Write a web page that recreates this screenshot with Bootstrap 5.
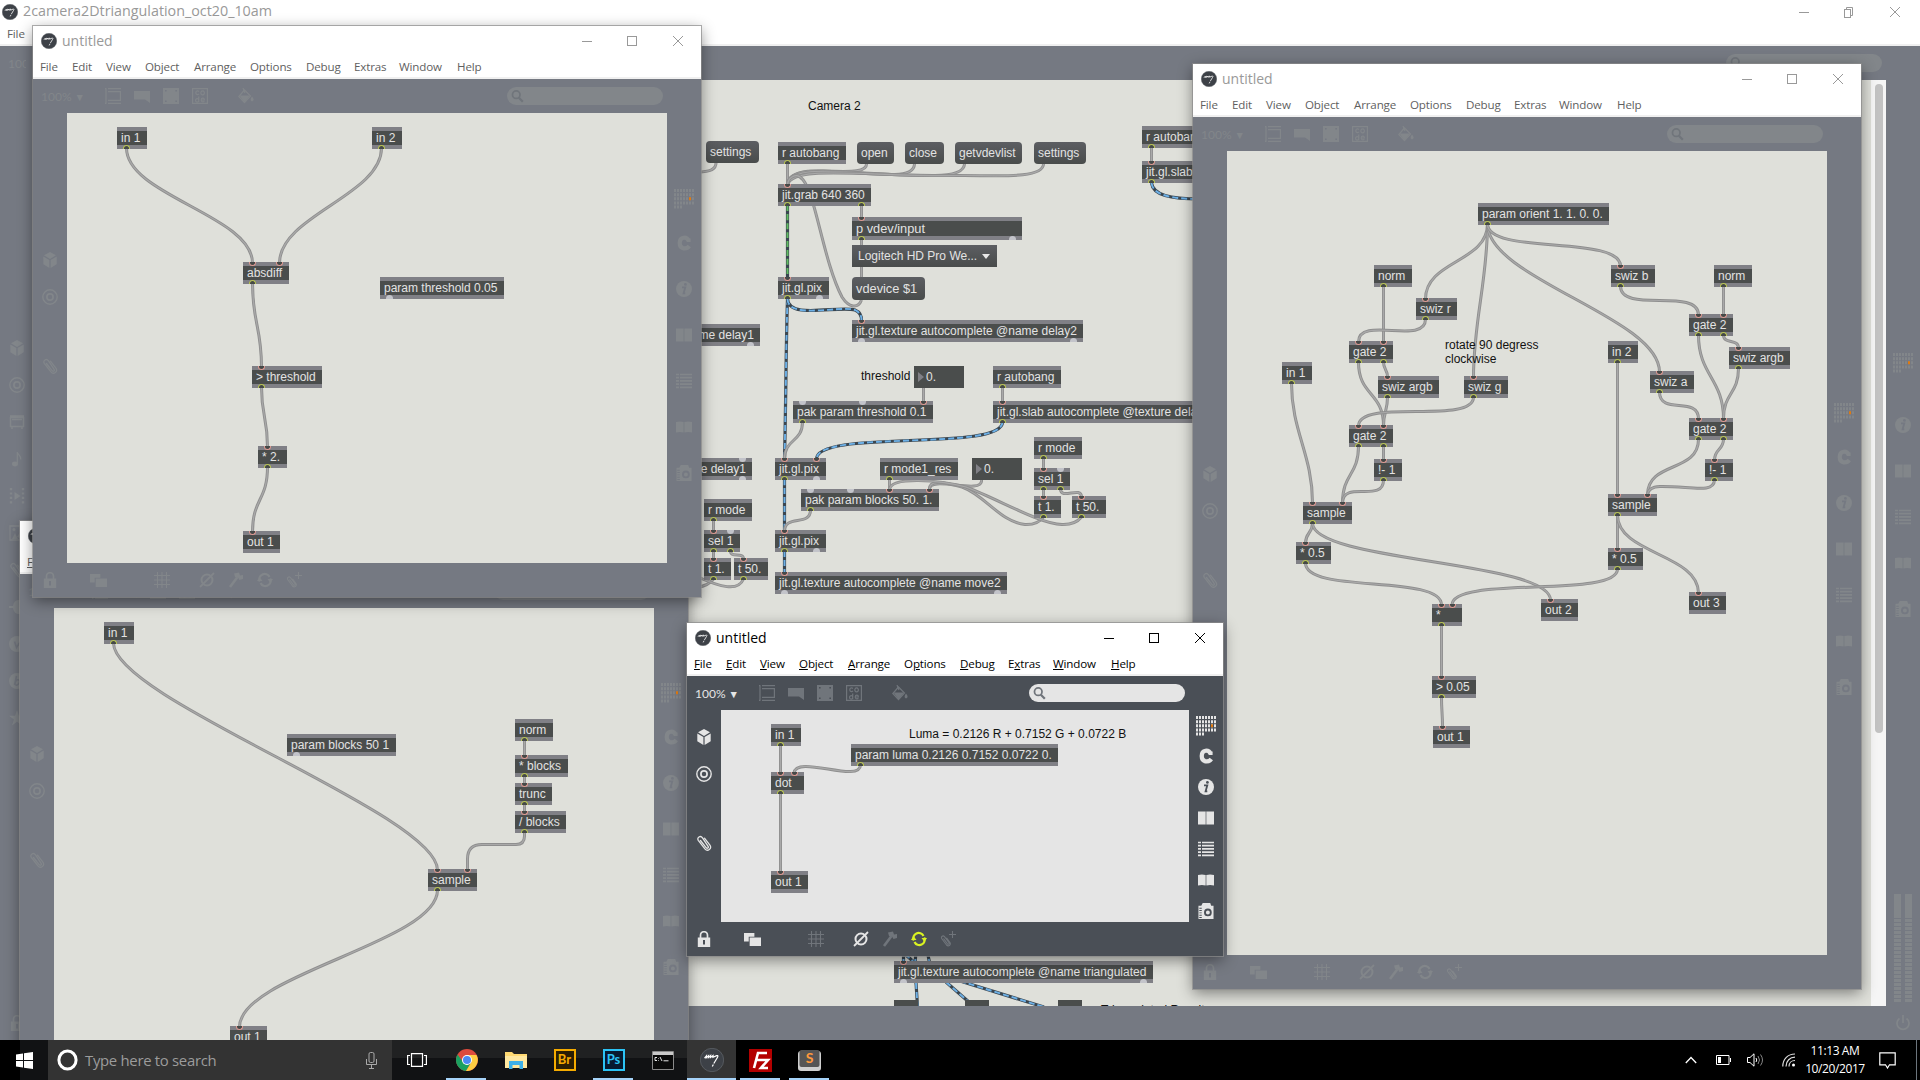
<!DOCTYPE html>
<html lang="en">
<head>
<meta charset="utf-8">
<title>2camera2Dtriangulation_oct20_10am</title>
<link rel="stylesheet" href="https://cdn.jsdelivr.net/npm/bootstrap@5.3.0/dist/css/bootstrap.min.css">
<style>
body{width:1920px;height:1080px;overflow:hidden;background:#757982;font-family:"Open Sans","Noto Sans",sans-serif;line-height:1}
svg{display:block}
.win{--frame:#757982;--ink:#82868a;--dim:#82868a;--paper:#dfe0da;--cap:#999;--menu:#5f5f5f;box-shadow:0 0 0 1px rgba(140,140,140,.7),0 4px 14px rgba(0,0,0,.45);background:var(--frame)}
.win.active{--frame:#4a4f56;--ink:#e5e5e5;--dim:#70757b;--paper:#e5e5e5;--cap:#000;--menu:#000}
.win-head{height:53px;background:#fff;border-bottom:2px solid #f0f0f0;flex:none;box-sizing:border-box}
.win-title{height:29px;padding-left:8px;color:var(--cap);font-size:14px}
.win.root .win-title{padding:8px 0 0 2px}
.win-title span{margin-left:5px;white-space:nowrap}
.win.root .win-title span{font-size:14.3px}
.caps svg{width:46px;height:20px;stroke:var(--cap);fill:none}
.win.root .caps{margin-right:2px}
.menu-list{height:24px;padding-left:7px;color:var(--menu);font-size:11.6px;letter-spacing:-.15px}
.menu-list li{flex:none;white-space:nowrap}
.menu-list li:nth-child(1){width:32px}.menu-list li:nth-child(2){width:34px}.menu-list li:nth-child(3){width:39px}
.menu-list li:nth-child(4){width:49px}.menu-list li:nth-child(5){width:56px}.menu-list li:nth-child(6){width:56px}
.menu-list li:nth-child(7){width:48px}.menu-list li:nth-child(8){width:45px}.menu-list li:nth-child(9){width:58px}
.tools{height:34px;flex:none;color:var(--dim)}
.zoomlab{width:65.5px;padding-left:8px;font:12px Lato,sans-serif;color:var(--ink);white-space:nowrap}
.root .zoomlab{width:26px;overflow:hidden;margin-right:39.5px}
.slot29{width:29px;flex:none}
.lead-fill{width:17px}
.lead-layers{width:16.5px}
.lead-hash{width:35px}
.lead-mute{width:16px}
.find{width:156px;height:18px;border-radius:9px;background:var(--ink);margin-right:38px;padding-left:4px;color:#70757b}
.foot{height:34px;flex:none;color:var(--ink)}
.rail{width:34px;flex:none;color:var(--ink)}
.rail-l .cell{height:37px;flex:none}
.rail-r .cell{height:46px;flex:none}
.rail-r .cell:first-child{height:42px}
.active .rail-r .cell{height:31px}.active .rail-r .cell:first-child{height:29px}
.root .rail-r .cell:first-child{margin-bottom:18px}
.cell.gap-up{margin-top:32px}
.faint{color:var(--dim)}
.lime{color:#d9f222}
.paper{background:var(--paper)}
.nd{height:22px;background:#4a4d4c;border-top:4px solid #808086;border-bottom:4px solid #808086;color:#e3e3e3;font:12px/14px "Liberation Sans",Arial,sans-serif;padding-left:4px;white-space:pre;box-sizing:border-box}
.nd.msg{border:0;border-radius:4px;background:linear-gradient(#5c5e62,#494c4b);line-height:22px}
.nd.num{border:0;line-height:22px;padding-left:12px}
.nd.num::before{content:"";position:absolute;left:4px;top:6px;border-left:6px solid #808086;border-top:5px solid transparent;border-bottom:5px solid transparent}
.nd.stub{border:0}
.nd.tail{padding-right:6px;text-align:right}
.nd.drop{border:0;background:linear-gradient(#5c5e62,#494c4b);line-height:22px;padding-left:6px}
.nd.drop::after{content:"";position:absolute;right:7px;top:9px;border-top:5px solid #e8e8e8;border-left:4px solid transparent;border-right:4px solid transparent}
.nd.big{height:23px;font-size:12.8px;line-height:15px}.nd.msg.big{line-height:23px}
.nt{font:12px/14px "Liberation Sans",Arial,sans-serif;color:#111;white-space:pre}
.prt{width:7px;height:4px;margin-left:-3.5px;box-sizing:border-box;background:#454948}
.prt.o{border:1px solid #b9c552;border-bottom:0;border-radius:4px 4px 0 0}
.prt.i{border:1px solid #e09a92;border-top:0;border-radius:0 0 4px 4px}
.prt.u{background:#c3c4ca;border-radius:4px 4px 0 0}.prt.d{background:#c3c4ca;border-radius:0 0 4px 4px}
.track{width:15px;background:#f5f5f5;padding-top:4px}
.thumb{width:8px;height:649px;border-radius:4px;background:#c2c2c2}
.meter{height:108px;gap:4px;margin-bottom:4px}
.meter i{width:7px;background:linear-gradient(#82868a 0 24px,transparent 24px),repeating-linear-gradient(#757982 0 1px,#82868a 1px 4px)}
.tb{top:1040px;height:40px;background:#000;color:#fff}
.tb-glass{width:42px;left:20px;height:40px;background:#111214}
.tb-start{width:48px}
.tb-search{width:344px;background:#333;color:#9c9c9c;font-size:14.9px;padding:0 15px 0 9px;letter-spacing:-.3px}
.tb-search span{margin-left:7px}
.tb-app{width:49px;height:40px;background:linear-gradient(#202122 0 18px,#111214 18px)}
.tb-app.wide{width:50px}
.tb-app.plain{background:#000}
.tb-app.cur{background:#343434}
.tb-app.run::after{content:"";position:absolute;bottom:0;height:2px;left:4px;right:5px;background:#a6d3f9}
.tb-app.cur.run::after{left:0;right:0}
.adobe{width:22px;height:22px;font:bold 13px/17px Lato,"Open Sans",sans-serif;text-align:center;border:2px solid}
#br{color:#f5ab00;background:#2a1e04}#ps{color:#2cc3f5;background:#071a30}
.tray-clock{font-size:12px;line-height:18px;letter-spacing:-.4px;width:70px}
.caret{margin-right:19px}
#bat{margin-right:16px}#vol{margin-right:18px}#wifi{margin-right:4px}
#bell{margin-left:9px;margin-right:20px}#peek{width:4px}
</style>
<script src="https://cdn.jsdelivr.net/npm/bootstrap@5.3.0/dist/js/bootstrap.bundle.min.js"></script>
</head>
<body>
<svg width="0" height="0" class="position-absolute">
<defs>
<symbol id="max" viewBox="0 0 16 16"><circle cx="8" cy="8" r="7.800" fill="#3d4147" stroke="#6a6e73" stroke-width=".4"/><path d="M3 6.700l1.300-1.500-.1 1.300 1.500-1.400-.1 1.300L7.100 5 7 6.300l1.700-1.300-.1 1.200 2.500-1.100c1.100-.2.900.5.500 1.200L9.200 10.300M8.900 11l-.7 1.400" fill="none" stroke="#fff" stroke-width=".8"/></symbol>
<symbol id="cube" viewBox="0 0 16 16"><path d="M8 0l6 3.300L8 7 2 3.300zM1.300 4.500L7.400 8v8L1.300 12.300zM14.700 4.500L8.600 8v8l6.100-3.700z" fill="currentColor"/></symbol>
<symbol id="target" viewBox="0 0 16 16"><g fill="none" stroke="currentColor"><circle cx="8" cy="8" r="7.200" stroke-width="1.400"/><circle cx="8" cy="8" r="3.100" stroke-width="1.700"/></g></symbol>
<symbol id="clip" viewBox="0 0 16 16"><path d="M4.500 5.500l5.800 7.300c1.100 1.200 2.600 0 1.800-1.400L6.500 2.900C4.500 0 .5 2.500 2.300 5.300l6.600 8.500c2.800 3.300 7.300-.2 5-3.600L8.500 3.200" fill="none" stroke="currentColor" stroke-width="1.300" stroke-linecap="round"/></symbol>
<symbol id="clipplus" viewBox="0 0 16 16"><path d="M3.500 7.500l4 5.300c1 1 2 .2 1.500-1L4.500 5.600C3 4 .800 5.500 1.700 7.500l4.800 6.500c1.900 1.900 4.600.1 3.600-2.300L6.500 6.700M12.500 0v7M9 3.500h7" fill="none" stroke="currentColor" stroke-width="1.100"/></symbol>
<symbol id="film" viewBox="0 0 16 16"><path d="M1.500 3.500h13v9h-13zM1 2h14M3 5.500h10M3 13v2M13 13v2" fill="none" stroke="currentColor" stroke-width="1.500"/></symbol>
<symbol id="note" viewBox="0 0 16 16"><ellipse cx="6" cy="13" rx="3" ry="2.400" fill="currentColor"/><path d="M8.300 13V1c.5 3 4 3.500 3.500 7.500" fill="none" stroke="currentColor" stroke-width="1.300"/></symbol>
<symbol id="play" viewBox="0 0 16 16"><path d="M5.500 4l6 4-6 4z" fill="currentColor"/><path d="M2 0v16M14 0v16" stroke="currentColor" stroke-width="2.400" stroke-dasharray="2.200 2.200"/></symbol>
<symbol id="image" viewBox="0 0 16 16"><path d="M1 1h14v14H1z" fill="none" stroke="currentColor" stroke-width="1.300"/><path d="M3 14l3-6 3 6zM8 12l3-5 3 7z" fill="currentColor"/><circle cx="5" cy="4.500" r="1.500" fill="currentColor"/></symbol>
<symbol id="plug" viewBox="0 0 16 16"><path d="M0 7h4a5 7 0 0 1 5-6h3v14H9a5 7 0 0 1-5-6H0z" fill="currentColor"/></symbol>
<symbol id="vdisc" viewBox="0 0 16 16"><circle cx="8" cy="8" r="8" fill="currentColor"/><path d="M5.500 5.500l2 6 4-6" fill="none" stroke="var(--frame)" stroke-width="1.600"/></symbol>
<symbol id="bdisc" viewBox="0 0 16 16"><circle cx="8" cy="8" r="8" fill="currentColor"/><path d="M7.500 3L5.500 12l1-3.500c2-3 5-1.500 4 1S7 13 6 11" fill="none" stroke="var(--frame)" stroke-width="1.600"/></symbol>
<symbol id="star" viewBox="0 0 16 16"><path d="M8 0l2 5.800h6l-4.900 3.600L13 15.500 8 11.800l-5 3.700 1.900-6.100L0 5.800h6z" fill="currentColor"/></symbol>
<symbol id="book" viewBox="0 0 16 16"><path d="M0 1.500h7.600v13H0zM8.400 1.500H16v13H8.400z" fill="currentColor"/><path d="M7.600 1.500h.8v13h-.8z" fill="currentColor" opacity=".5"/></symbol>
<symbol id="book2" viewBox="0 0 16 16"><path d="M0 3q4-1 7.600 0v10.500q-3.600-1-7.600 0zM16 3q-4-1-7.600 0v10.500q3.600-1 7.600 0z" fill="currentColor"/><path d="M7.600 3h.8v10h-.8z" fill="currentColor" opacity=".5"/></symbol>
<symbol id="list" viewBox="0 0 16 16"><path d="M0 1.500h3M4 1.500h12M0 4.700h3M4 4.700h12M0 7.900h3M4 7.900h12M0 11.100h3M4 11.100h12M0 14.300h3M4 14.300h12" stroke="currentColor" stroke-width="1.700"/></symbol>
<symbol id="cam" viewBox="0 0 16 17"><path d="M3 3L4.500 0h8L13.500 3H16v14H0V3z" fill="currentColor"/><circle cx="10" cy="10" r="3.100" fill="none" stroke="var(--frame)" stroke-width="2"/><path d="M2.200 5v11" stroke="var(--frame)" stroke-width="2.600" stroke-dasharray="1 1.500"/></symbol>
<symbol id="info" viewBox="0 0 16 16"><circle cx="8" cy="8" r="8" fill="currentColor"/><circle cx="9.400" cy="3.400" r="1.400" fill="var(--frame)"/><path d="M6 6.300h3.300L7.600 12.300h1.700" fill="none" stroke="var(--frame)" stroke-width="1.800"/></symbol>
<symbol id="cee" viewBox="0 0 16 16"><path d="M12.300 5.500C10.800 1.600 3.700 1.200 3.700 8S10.800 14.400 13.300 11" fill="none" stroke="currentColor" stroke-width="4.200"/><path d="M10.600 3.500h4v3.500h-4z" fill="currentColor"/></symbol>
<symbol id="lock" viewBox="0 0 16 16"><path d="M4.500 7V4.200a3.400 3.400 0 0 1 7 0V7" fill="none" stroke="currentColor" stroke-width="1.700"/><path fill-rule="evenodd" d="M1.800 6.500h12.400V16H1.800zM7 9v4.500h2V9z" fill="currentColor"/></symbol>
<symbol id="layers" viewBox="0 0 18 16"><path d="M0 1h11v4H5v5H0zM6 6h12v9H6z" fill="currentColor"/></symbol>
<symbol id="hash" viewBox="0 0 16 16"><path d="M3.500 0v16M8 0v16M12.500 0v16M0 3.500h16M0 8h16M0 12.500h16" stroke="currentColor" stroke-width="1.100"/></symbol>
<symbol id="mute" viewBox="0 0 16 16"><circle cx="8" cy="8" r="5.500" fill="none" stroke="currentColor" stroke-width="2"/><path d="M1 15L15 1" stroke="currentColor" stroke-width="1.800"/></symbol>
<symbol id="hammer" viewBox="0 0 16 16"><path d="M2 15l7.500-10" stroke="currentColor" stroke-width="2.600"/><path d="M6 1.500l5-1 1 3 3-.5 0 4-3.500 1L10 5.500 7 5z" fill="currentColor"/></symbol>
<symbol id="cycle" viewBox="0 0 16 16"><path d="M2.800 9.500A5.300 5.300 0 0 1 12.500 5M13.200 6.500A5.300 5.300 0 0 1 3.500 11" fill="none" stroke="currentColor" stroke-width="2.200"/><path d="M0 9h5.500L2.500 5zM16 7h-5.500l3 4z" fill="currentColor"/></symbol>
<symbol id="t1" viewBox="0 0 16 16"><path d="M0 .7h1.500M0 15.300h1.500M3 .7h13M3 3.700h13M3 12.300h13M3 15.300h13M1 1v14M15.400 4v8" fill="none" stroke="currentColor" stroke-width="1.200"/></symbol>
<symbol id="t2" viewBox="0 0 16 16"><path d="M0 3h16v12l-5-3.500H0z" fill="currentColor"/></symbol>
<symbol id="t3" viewBox="0 0 16 16"><path d="M0 0h16v16H0z" fill="currentColor"/><path d="M2 2h1.600v1.600H2zM12.400 2H14v1.600h-1.600zM2 12.400h1.600V14H2zM12.400 12.400H14V14h-1.600z" fill="var(--frame)"/></symbol>
<symbol id="t4" viewBox="0 0 16 16"><path d="M.6.6h14.800v14.800H.6z" fill="none" stroke="currentColor" stroke-width="1.200"/><path d="M7 3.500C5.500 2.200 3.800 3 3.800 4.700S5.500 7.200 7 6M10.600 2.900a1.800 2 0 1 0 .01 0M6.700 8.500v5.700M6.700 12a1.600 1.700 0 1 0 0 .8M9.200 12h3.200c0-2.500-3.200-2.500-3.200 0 0 2 2 2.300 3.200 1.300" fill="none" stroke="currentColor" stroke-width="1.200"/></symbol>
<symbol id="fill" viewBox="0 0 16 16"><path d="M6.500 2L12.500 8 6.500 14.500.8 8.500z" fill="none" stroke="currentColor" stroke-width="1.200"/><path d="M1.500 7.500h10.500l-5.500 7zM14 8.500q3.200 4 0 5-2.800-1 0-5z" fill="currentColor"/><path d="M5 0l2 5" stroke="currentColor" stroke-width="1.200"/></symbol>
<symbol id="glass" viewBox="0 0 16 16"><circle cx="6" cy="6.500" r="4.300" fill="none" stroke="currentColor" stroke-width="2"/><path d="M9 10l4.500 4.500" stroke="currentColor" stroke-width="2.600"/></symbol>
<symbol id="power" viewBox="0 0 16 16"><path d="M4.500 3.500a6 6 0 1 0 7 0M8 0v8" fill="none" stroke="currentColor" stroke-width="1.700"/></symbol>
<symbol id="grid" viewBox="0 0 20 20"><path d="M0 1.600h20M0 5.700h20M0 9.800h20M0 13.900h20M0 18h8" stroke="currentColor" stroke-width="3" stroke-dasharray="2 1"/><path d="M15 8.300h2v3h-2z" fill="#e07a10"/></symbol>
</defs>
</svg>

<main id="desk"></main>

<footer class="tb position-absolute start-0 w-100 d-flex align-items-center">
  <div class="tb-glass position-absolute"></div>
  <div class="tb-start d-flex justify-content-center position-relative"><svg width="17" height="17" viewBox="0 0 17 17" fill="#fff"><path d="M0 2.400l7-1V8H0zM8 1.200L17 0v8H8zM0 9h7v6.600l-7-1zM8 9h9v8l-9-1.200z"/></svg></div>
  <div class="tb-search h-100 d-flex align-items-center position-relative">
    <svg width="21" height="22" viewBox="0 0 21 22"><ellipse cx="10.500" cy="11" rx="8.600" ry="9" fill="none" stroke="#fff" stroke-width="3"/></svg>
    <span class="flex-grow-1">Type here to search</span>
    <svg width="11" height="17" viewBox="0 0 11 17" fill="none" stroke="#aaa"><rect x="3" y=".5" width="5" height="10" rx="1.500"/><path d="M.5 7v5.500h10V7M5.500 12.500V16M3 16.500h5"/></svg>
  </div>
  <div class="tb-app wide d-flex align-items-center justify-content-center"><svg width="20" height="14" viewBox="0 0 20 14" fill="none" stroke="#fff" stroke-width="1.200"><path d="M4.500 .6h11v12.800h-11zM3 2.500H.6v9H3M17 2.500h2.400v9H17"/></svg></div>
  <div class="tb-app run position-relative d-flex align-items-center justify-content-center"><svg width="22" height="22" viewBox="0 0 22 22"><circle cx="11" cy="11" r="11" fill="#dd4b3e"/><path d="M1.500 5.500A11 11 0 0 0 10 22l5-8.500-8-.5z" fill="#1aa160"/><path d="M20.500 6H11l4.500 7L10 22A11 11 0 0 0 20.500 6z" fill="#ffcd42"/><circle cx="11" cy="11" r="5" fill="#fff"/><circle cx="11" cy="11" r="4" fill="#4a8af4"/></svg></div>
  <div class="tb-app d-flex align-items-center justify-content-center"><svg width="22" height="19" viewBox="0 0 22 19"><path d="M0 1h7l2 2h13v14H0z" fill="#ffd972"/><path d="M0 5h22v12H0z" fill="#ffe8a0"/><path d="M4 10h14v8h-3.500v-4h-7v4H4z" fill="#3db0e8"/></svg></div>
  <div class="tb-app d-flex align-items-center justify-content-center"><div class="adobe" id="br">Br</div></div>
  <div class="tb-app run position-relative d-flex align-items-center justify-content-center"><div class="adobe" id="ps">Ps</div></div>
  <div class="tb-app d-flex align-items-center justify-content-center"><svg width="22" height="19" viewBox="0 0 22 19"><path d="M.5.5h21v18H.5z" fill="#0a0a0a" stroke="#8a8a8a"/><path d="M1 1h20v3H1z" fill="#c9c9c9"/><path d="M5 6.500H3v3h2M6.500 7v.6M6.500 9v.6M8 6l2 4M11.500 9.800h5" fill="none" stroke="#fff" stroke-width=".9"/></svg></div>
  <div class="tb-app cur run position-relative d-flex align-items-center justify-content-center"><svg width="24" height="24"><use href="#max"/></svg></div>
  <div class="tb-app plain run position-relative d-flex align-items-center justify-content-center"><svg width="23" height="23" viewBox="0 0 23 23"><path d="M0 0h23v23H0z" fill="#b30000"/><path d="M5 19L9 4h9M7.500 11h6M12 11h7l-7 8h7" fill="none" stroke="#fff" stroke-width="2.600"/></svg></div>
  <div class="tb-app plain run position-relative d-flex align-items-center justify-content-center"><svg width="23" height="21" viewBox="0 0 23 21"><rect x="0" y="1" width="23" height="20" rx="3" fill="#cfcfcf"/><rect x="1.500" y="0" width="20" height="17" rx="2" fill="#555"/><text x="11.500" y="13" font-size="14" font-weight="bold" text-anchor="middle" fill="#ff9a3c" font-family="Lato">S</text></svg></div>
  <div class="ms-auto d-flex align-items-center h-100">
    <svg class="caret" width="12" height="8" viewBox="0 0 12 8" fill="none" stroke="#fff" stroke-width="1.300"><path d="M.8 7L6 1.500 11.200 7"/></svg>
    <svg id="bat" width="15" height="10" viewBox="0 0 15 10" fill="none" stroke="#fff"><path d="M.5.5h12.500v9H.5zM14.500 3v4"/><path d="M2 2h3v6H2z" fill="#fff" stroke="none"/></svg>
    <div id="vol"><svg width="17" height="14" viewBox="0 0 17 14" fill="none" stroke="#fff"><path d="M.5 4.500H3L7 .8v12.400L3 9.500H.5zM9 5q1.500 2 0 4"/><path d="M11 3q3 4 0 8M13.500 1.500q4 5.500 0 11" stroke="#888"/></svg></div>
    <svg id="wifi" width="14" height="14" viewBox="0 0 14 14" fill="none" stroke="#ddd" stroke-width="1.200"><path d="M.8 13.500C.8 6 6 1 13 1M4 13.500C4 8 8 4.200 13 4.200M7 13.500C7 10 9.500 7.500 13 7.500"/><circle cx="11.500" cy="12" r="1.500" fill="#fff" stroke="none"/></svg>
    <div class="tray-clock text-center">11:13 AM<br>10/20/2017</div>
    <svg id="bell" width="17" height="17" viewBox="0 0 17 17" fill="none" stroke="#fff" stroke-width="1.200"><path d="M.8.8h15.400v12H10.500L8.500 16 6.500 12.800H.8z"/></svg>
    <div class="h-100 border-start border-secondary" id="peek"></div>
  </div>
</footer>

<script>
const ic = (id, s = 16, cls = '') => `<svg width="${s}" height="${s}" class="${cls}"><use href="#${id}"/></svg>`;
const cell = (id, s, cls = '') => `<div class="cell d-flex align-items-center justify-content-center ${cls}">${ic(id, s)}</div>`;
const slot = (id, cls = '', s = 16) => `<span class="slot29 d-flex justify-content-center ${cls}">${ic(id, s)}</span>`;
const MENU = ['File','Edit','View','Object','Arrange','Options','Debug','Extras','Window','Help'];
const KEYS = [0,0,0,0,0,1,0,1,0,0];

/* node: [x, y, width, text, inlets, outlets, kind]; a port given as a negative number is an idle one */
function ports(list, side, x, h) {
  return (list || []).map(p => {
    const live = p > 0, a = Math.abs(p);
    const c = side === 'in' ? (live ? 'i' : 'd') : (live ? 'o' : 'u');
    return `<span class="prt ${c} position-absolute" style="left:${a - x}px;top:${side === 'in' ? -4 : h - 8}px"></span>`;
  }).join('');
}
function cord(w) {
  const kind = w[4] || '';
  let d = w[0];
  if (typeof d === 'number') {
    const [x1, y1, x2, y2] = w, dist = Math.hypot(x2 - x1, y2 - y1);
    const k = Math.min(56, 22 + .22 * Math.abs(y2 - y1), dist * .5);
    d = `M${x1} ${y1}C${x1} ${y1 + k} ${x2} ${y2 - k} ${x2} ${y2}`;
  }
  const k2 = kind || w[1];
  if (k2 === 'blue' || k2 === 'green')
    return `<path d="${d}" stroke="#3a4650" stroke-width="3.200"/><path d="${d}" stroke="${k2 === 'blue' ? '#6db0e6' : '#62bd62'}" stroke-width="1.900" stroke-dasharray="6 3"/>`;
  return `<path d="${d}" stroke="#8f8f8f" stroke-width="3"/><path d="${d}" stroke="#a9a9a9" stroke-width="1.200"/>`;
}
function paper(w) {
  const ox = w.x + 34, oy = w.y + 87, W = w.w - 68, H = w.h - 121;
  const nodes = w.nodes.map(([x, y, wd, t, i, o, kind = '']) => {
    const h = kind.includes('big') ? 23 : 22, edge = /msg|num|drop/.test(kind);
    return `<div class="nd ${kind} position-absolute" style="left:${x - ox}px;top:${y - oy}px;width:${wd}px">${t.replace('>', '&gt;')}${edge ? '' : ports(i, 'in', x, h) + ports(o, 'out', x, h)}</div>`;
  }).join('');
  const notes = (w.notes || []).map(([x, y, t]) => `<div class="nt position-absolute" style="left:${x - ox}px;top:${y - oy}px">${t}</div>`).join('');
  return `<div class="paper position-relative overflow-hidden flex-grow-1"><svg class="position-absolute top-0 start-0" width="${W}" height="${H}" viewBox="${ox} ${oy} ${W} ${H}" fill="none">${w.cords.map(cord).join('')}</svg>${nodes}${notes}${w.root ? '<div class="track position-absolute end-0 top-0 h-100 d-flex justify-content-center"><div class="thumb"></div></div>' : ''}</div>`;
}
function win(w) {
  const on = w.active, f = on ? 'faint' : '';
  const items = w.root ? MENU.slice(0, 1) : MENU;
  const menu = items.map((m, n) => `<li>${on || w.keys ? m.slice(0, KEYS[n]) + '<u>' + m[KEYS[n]] + '</u>' + m.slice(KEYS[n] + 1) : m}</li>`).join('');
  const left = w.root ? ['cube','target','film','note','play','image','clip','plug','vdisc','bdisc','star'] : ['cube','target'];
  const right = w.root ? ['info','book','list','book2','cam'] : ['cee','info','book','list','book2','cam'];
  const mid = w.root ? '<rect x="18.500" y="7.500" width="6" height="8"/><path d="M20.500 7V5.500h6v8H25"/>' : '<rect x="18.500" y="5.500" width="9" height="9"/>';
  return `<section class="win position-absolute d-flex flex-column ${on ? 'active' : ''} ${w.root ? 'root' : ''}" style="left:${w.x}px;top:${w.y}px;width:${w.w}px;height:${w.h}px">
  <header class="win-head">
    <div class="win-title d-flex align-items-center">${ic('max')}<span>${w.title}</span>
      <div class="caps d-flex ms-auto"><svg><path d="M19 10.500h10"/></svg><svg>${mid}</svg><svg><path d="M18 5l10 10M28 5l-10 10"/></svg></div></div>
    <ul class="menu-list list-unstyled d-flex align-items-center m-0">${menu}</ul>
  </header>
  <div class="tools d-flex align-items-center"><span class="zoomlab">100%${w.root ? '' : ' <small>▼</small>'}</span>${slot('t1')}${slot('t2')}${slot('t3')}${slot('t4')}<span class="lead-fill"></span>${slot('fill')}<div class="find ms-auto d-flex align-items-center">${ic('glass', 14)}</div></div>
  <div class="d-flex flex-grow-1 overflow-visible" style="height:${w.h - 121}px">
    <div class="rail rail-l d-flex flex-column" style="padding-top:${w.lp}px">${left.map(i => cell(i, 16)).join('')}${w.root ? '' : cell('clip', 16, 'gap-up')}</div>
    ${paper(w)}
    <div class="rail rail-r d-flex flex-column" style="padding-top:${w.rp}px">${cell('grid', 20)}${right.map(i => cell(i, 16)).join('')}${w.root ? '<div class="meter d-flex justify-content-center mt-auto"><i></i><i></i></div>' : ''}</div>
  </div>
  <div class="foot d-flex align-items-center"><span class="rail d-flex justify-content-center">${ic('lock')}</span><span class="lead-layers"></span>${slot('layers', '', 17)}<span class="lead-hash"></span>${slot('hash', f)}<span class="lead-mute"></span>${slot('mute')}${slot('hammer', f)}${slot('cycle', on ? 'lime' : '')}${slot('clipplus', f)}${w.root ? '<span class="rail ms-auto d-flex justify-content-center">' + ic('power') + '</span>' : ''}</div>
</section>`;
}

const rootWin = {x:0,y:-7,w:1920,h:1047,lp:249.5,rp:262,root:true,title:'2camera2Dtriangulation_oct20_10am',
 nodes:[
  [706,141,53,'settings',0,0,'msg'],[778,142,68,'r autobang',0,[787.5]],[857,142,37,'open',0,0,'msg'],[905,142,39,'close',0,0,'msg'],
  [955,142,67,'getvdevlist',0,0,'msg'],[1034,142,52,'settings',0,0,'msg'],
  [778,184,93,'jit.grab 640 360',[787.5],[787.5,861.5]],[852,217,170,'p vdev/input',[861.5],[861.5,-1012.5],'big'],
  [852,245,145,'Logitech HD Pro We...',0,0,'drop'],[852,277,73,'vdevice $1',0,0,'msg big'],
  [778,277,51,'jit.gl.pix',[787.5],[787.5,-819.5]],[852,320,231,'jit.gl.texture autocomplete @name delay2',[861.5],[-861.5,-1073.5]],
  [529,324,231,'jit.gl.texture autocomplete @name delay1',0,[-750.5]],
  [1142,126,68,'r autobang',0,[1151.5]],[1142,161,280,'jit.gl.slab autocomplete @texture delay1',[1151.5],[1151.5]],
  [914,366,50,'0.',0,0,'num'],[993,366,68,'r autobang',0,[1002.5]],
  [793,401,140,'pak param threshold 0.1',[-802.5,-862.5,923.5],[802.5]],[993,401,280,'jit.gl.slab autocomplete @texture delay2',[1002.5],[1002.5]],
  [775,458,51,'jit.gl.pix',[784.5,816.5],[784.5,-816.5]],[880,458,78,'r mode1_res',0,[889.5]],[972,458,50,'0.',0,0,'num'],
  [1034,437,48,'r mode',0,[1043.5]],[1034,468,36,'sel 1',[1043.5,-1060.5],[1043.5,1060.5]],
  [1034,496,27,'t 1.',[1043.5],[1043.5]],[1072,496,34,'t 50.',[1081.5],[1081.5]],
  [801,489,138,'pak param blocks 50. 1.',[-810.5,-850,889.5,929.5],[810.5]],[775,530,51,'jit.gl.pix',[784.5],[784.5,-816.5]],
  [775,572,232,'jit.gl.texture autocomplete @name move2',[784.5],[-784.5,-997.5]],
  [516,458,236,'jit.gl.slab autocomplete @texture delay1',[-742.5],[-742.5],'tail'],
  [704,499,48,'r mode',0,[713.5]],[704,530,36,'sel 1',[713.5,-730.5],[713.5,730.5]],[704,558,27,'t 1.',[713.5],[713.5]],[734,558,34,'t 50.',[743.5],[743.5]],
  [894,961,259,'jit.gl.texture autocomplete @name triangulated',[903.5],[-903.5,-1143.5]],
  [894,1000,24,'',0,0,'stub'],[965,1000,24,'',0,0,'stub'],[1058,1000,24,'',0,0,'stub']],
 notes:[[808,99,'Camera 2'],[861,369,'threshold'],[1101,1003,'Triangulated Result']],
 cords:[
  [787.5,163,787.5,185],[861.5,205,861.5,218],[861.5,239,861.5,279],
  ['M716 163C716 170 708 172 698 172'],['M866.500 164C867 182 788 158 787.500 185'],['M914.500 164Q914 174 895 174.500C850 176 790 160 787.500 185'],
  ['M964.500 164Q964 175 935 175.500C860 177 792 160 787.500 185'],['M1043.500 164C1043 180 990 175 960 175.500C870 177 792 164 787.500 185'],
  ['M861.500 300C858 309 849 308 842 297C828 270 820 225 812 200C806 180 800 174 794 176Q788 178 787.500 185'],
  [787.5,205,787.5,279,'green'],['M787.500 299C786 340 786 400 784.500 459','blue'],['M787.500 299C788 320 840 305 855 310Q862 313 861.500 321','blue'],
  [1151.5,147,1151.5,162],['M1151.500 183C1153 195 1170 199 1200 199','blue'],
  [923.5,388,923.5,402],[1002.5,388,1002.5,402],[802.5,422,784.5,459],[1002.5,422,816.5,459,'blue'],
  [784.5,479,784.5,531,'blue'],[784.5,551,784.5,573,'blue'],[810.5,510,784.5,531],[889.5,479,889.5,490],
  ['M981.500 480C983 496 928 474 929.500 490'],
  ['M1043.500 517Q1038 525 1025 524.500C1000 522 985 495 962 487C940 481 929 480 929.500 490'],
  ['M1081.500 517Q1075 525 1062 524.500C1040 524 1000 500 966 487C940 480 890 476 889.500 490'],
  [1043.5,458,1043.5,469],[1043.5,489,1043.5,497],[1060.5,489,1081.5,497],
  [713.5,520,713.5,531],[713.5,551,713.5,559],[730.5,551,743.5,559],
  ['M713.500 579Q708 586 698 587'],['M743.500 579C738 592 720 587 698 577'],
  ['M903.500 950V962','blue'],['M916 983L917.500 1006','blue'],['M946 982L970 1003','blue'],['M960 981L1044 1007','blue'],['M905 954L916 964','blue'],['M927 950L930 965','blue'],['M916 950L915 965','blue']]};

const blocksWin = {x:20,y:521,w:668,h:571,lp:127.5,rp:64,keys:true,title:'untitled',
 nodes:[[104,622,30,'in 1',0,[113.5]],[287,734,109,'param blocks 50 1',0,[-296.5]],[515,719,38,'norm',0,[524.5]],[515,755,53,'* blocks',[524.5],[524.5]],
  [515,783,37,'trunc',[524.5],[524.5]],[515,811,51,'/ blocks',[524.5],[524.5]],[428,869,49,'sample',[437.5,467.5],[437.5]],[230,1026,37,'out 1',[239.5],0]],
 cords:[[113.5,643,437.5,870],[524.5,740,524.5,756],[524.5,776,524.5,784],[524.5,804,524.5,812],
  ['M524.500 832V836Q524.500 844.500 516 844.500H482Q467.500 844.500 467.500 859V870'],[437.5,890,239.5,1027]]};

const diffWin = {x:33,y:26,w:668,h:571,lp:128.5,rp:65,title:'untitled',
 nodes:[[117,127,30,'in 1',0,[126.5]],[372,127,30,'in 2',0,[381.5]],[243,262,46,'absdiff',[252.5,279.5],[252.5]],[380,277,124,'param threshold 0.05',0,[-389.5]],
  [252,366,70,'> threshold',[261.5],[261.5]],[258,446,29,'* 2.',[267.5],[267.5]],[243,531,37,'out 1',[252.5],0]],
 cords:[[126.5,148,252.5,263],[381.5,148,279.5,263],[252.5,283,261.5,367],[261.5,387,267.5,447],[267.5,467,252.5,532]]};

const sampleWin = {x:1193,y:64,w:668,h:925,lp:304.5,rp:241,title:'untitled',
 nodes:[[1478,203,131,'param orient 1. 1. 0. 0.',0,[1487.5]],[1374,265,38,'norm',0,[1383.5]],[1416,298,41,'swiz r',[1425.5],[1425.5]],
  [1611,265,44,'swiz b',[1620.5],[1620.5]],[1714,265,38,'norm',0,[1723.5]],[1689,314,44,'gate 2',[1698.5,1723.5],[1698.5,1723.5]],
  [1349,341,44,'gate 2',[1358.5,1383.5],[1358.5,1383.5]],[1282,362,30,'in 1',0,[1291.5]],[1378,376,61,'swiz argb',[1387.5],[1387.5]],
  [1464,376,44,'swiz g',[1473.5],[1473.5]],[1608,341,30,'in 2',0,[1617.5]],[1650,371,44,'swiz a',[1659.5],[1659.5]],
  [1729,347,61,'swiz argb',[1738.5],[1738.5]],[1689,418,44,'gate 2',[1698.5,1723.5],[1698.5,1723.5]],[1349,425,44,'gate 2',[1358.5,1383.5],[1358.5,1383.5]],
  [1374,459,28,'!- 1',[1383.5],[1383.5]],[1705,459,28,'!- 1',[1714.5],[1714.5]],[1303,502,49,'sample',[1312.5,1342.5],[1312.5]],
  [1608,494,49,'sample',[1617.5,1647.5],[1617.5]],[1296,542,35,'* 0.5',[1305.5],[1305.5]],[1608,548,35,'* 0.5',[1617.5],[1617.5]],
  [1541,599,37,'out 2',[1550.5],0],[1689,592,37,'out 3',[1698.5],0],[1432,604,30,'*',[1441.5,1452],[1441.5]],
  [1432,676,44,'> 0.05',[1441.5],[1441.5]],[1433,726,37,'out 1',[1442.5],0]],
 notes:[[1445,338,'rotate 90 degress\nclockwise']],
 cords:[[1487.5,224,1425.5,299],[1487.5,224,1473.5,377],[1487.5,224,1659.5,372],[1487.5,224,1620.5,266],[1383.5,286,1383.5,342],[1425.5,319,1358.5,342],
  [1620.5,286,1698.5,315],[1723.5,286,1723.5,315],[1358.5,362,1383.5,426],[1383.5,362,1387.5,377],[1387.5,397,1383.5,426],[1473.5,397,1358.5,426],
  [1358.5,446,1342.5,503],[1383.5,446,1383.5,460],[1383.5,480,1342.5,503],[1291.5,383,1312.5,503],[1617.5,362,1617.5,495],
  [1698.5,335,1723.5,419],[1723.5,335,1738.5,348],[1738.5,368,1723.5,419],[1659.5,392,1698.5,419],[1698.5,439,1647.5,495],[1723.5,439,1714.5,460],
  ['M1714.500 480C1714 494 1690 486 1660 486.500Q1648 487 1647.500 495'],[1312.5,523,1305.5,543],[1312.5,523,1550.5,600],[1305.5,563,1441.5,605],
  [1617.5,515,1617.5,549],[1617.5,515,1698.5,593],[1617.5,569,1452,605],[1441.5,625,1441.5,677],[1441.5,697,1442.5,727]]};

const lumaWin = {x:687,y:623,w:536,h:333,lp:8.5,rp:1.5,active:true,title:'untitled',
 nodes:[[771,724,30,'in 1',0,[780.5]],[771,772,33,'dot',[780.5,794],[780.5]],[851,744,207,'param luma 0.2126 0.7152 0.0722 0.',0,[860.5]],[771,871,37,'out 1',[780.5],0]],
 notes:[[909,727,'Luma = 0.2126 R + 0.7152 G + 0.0722 B']],
 cords:[[780.5,745,780.5,773],['M860.500 765C860 784 796 754 794 773'],[780.5,793,780.5,872]]};

document.getElementById('desk').innerHTML = [rootWin, blocksWin, diffWin, sampleWin, lumaWin].map(win).join('');
</script>
</body>
</html>
